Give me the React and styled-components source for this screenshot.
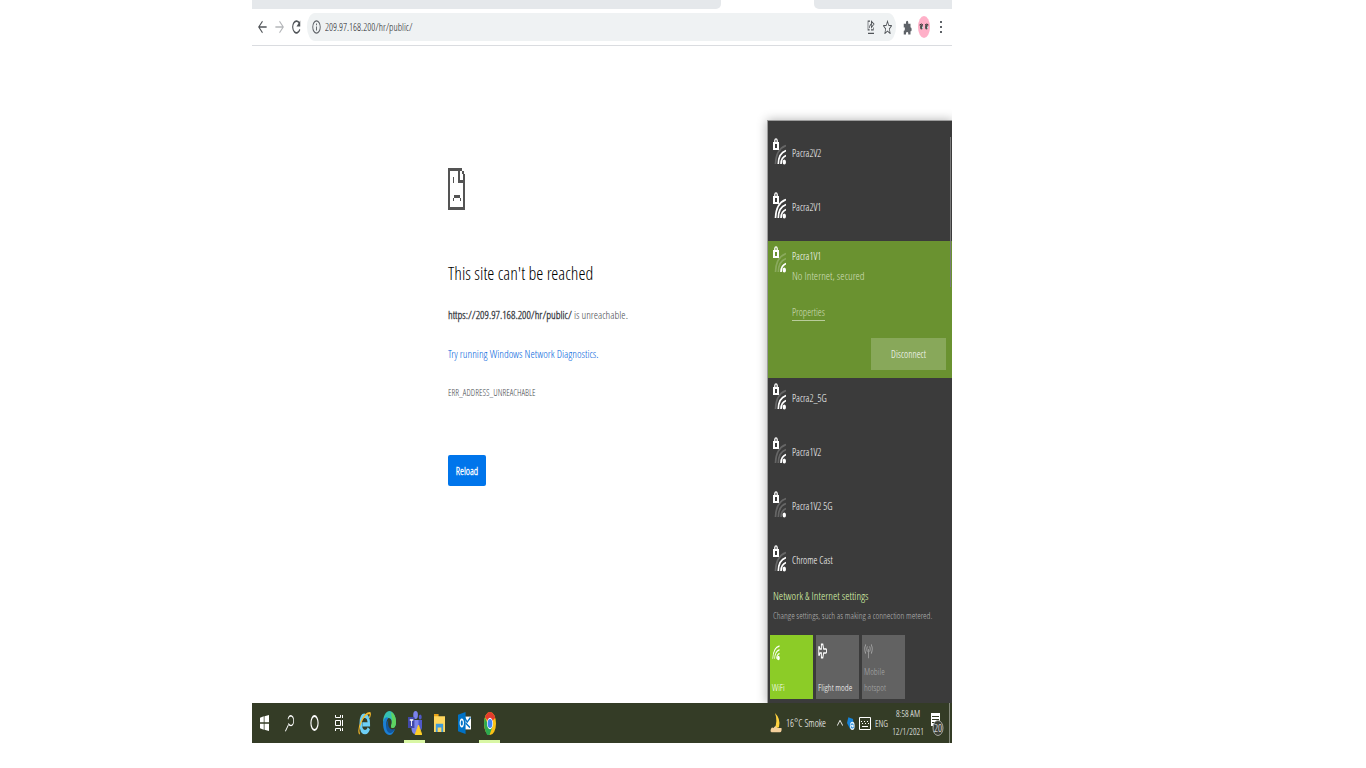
import React from "react";
import styled, { createGlobalStyle } from "styled-components";

const Global = createGlobalStyle`
  * { box-sizing: border-box; }
  body { margin: 0; background: #fff; font-family: "Open Sans Condensed Light", "Open Sans Condensed", "Roboto Condensed", Roboto, "Liberation Sans", sans-serif; font-weight: 300; font-size: 10px; color: #46494e; }
  button { font: inherit; border: 0; padding: 0; background: none; color: inherit; }
  h1, p, ul { margin: 0; padding: 0; }
  ul { list-style: none; }
  svg { display: block; flex: none; }
`;

const Page = styled.div`
  display: grid;
  grid-template-columns: 252fr 700fr 414fr;
`;
const Desktop = styled.div`
  grid-column: 2;
  min-width: 0;
`;

/* Browser chrome */
const TabStrip = styled.div`
  display: flex;
  justify-content: space-between;
  height: 9px;
`;
const TabGroup = styled.div`
  flex: ${(p) => p.$grow} 0 0;
  background: #e5e8eb;
  border-radius: ${(p) => (p.$end ? "0 0 0 5px" : "0 0 5px 0")};
`;
const ActiveTab = styled.div`
  flex: 93 0 0;
`;
const Toolbar = styled.div`
  display: flex;
  align-items: center;
  gap: 5px;
  height: 37px;
  padding: 0 5px 0 4px;
  border-bottom: 1px solid #dadce0;
`;
const IconButton = styled.button`
  display: grid;
  place-items: center;
  width: 12px;
  height: 24px;
`;
const AddressBar = styled.div`
  flex: 1;
  display: flex;
  align-items: center;
  gap: 4px;
  height: 28px;
  min-width: 0;
  padding: 0 3px 0 5px;
  border-radius: 8px / 14px;
  background: #eff2f3;
`;
const AddressInput = styled.input`
  flex: 1;
  min-width: 0;
  border: 0;
  padding: 0;
  background: transparent;
  font: inherit;
  font-size: 10px;
  line-height: 20px;
  color: #202124;
`;
const Avatar = styled.button`
  display: grid;
  place-items: center;
  width: 12px;
  height: 22px;
  border-radius: 50%;
  background: #ffb0c8;
`;

/* Content area */
const Content = styled.main`
  display: flex;
  justify-content: space-between;
  align-items: flex-end;
  padding-top: 75px;
  overflow: hidden;
`;
const ErrorPage = styled.section`
  align-self: flex-start;
  padding: 47px 0 0 196px;
  flex: 1;
  min-width: 0;
  white-space: nowrap;
`;
const Heading = styled.h1`
  margin-top: 48px;
  font-size: 18px;
  font-weight: 300;
  line-height: 30px;
  color: #000;
`;
const Line = styled.p`
  margin-top: ${(p) => p.$gap}px;
  font-size: ${(p) => p.$size}px;
  line-height: 20px;
  strong { font-weight: 700; }
  a { color: #0063dc; text-decoration: none; }
`;
const Reload = styled.button`
  display: block;
  margin-top: 52px;
  width: 38px;
  height: 31px;
  border-radius: 2px;
  background: #0075eb;
  color: #fff;
  font-size: 10px;
  font-weight: 700;
`;

/* Network flyout */
const Flyout = styled.aside`
  position: relative;
  flex: none;
  width: 184px;
  padding-top: 12px;
  background: #3b3b3b;
  color: #fff;
  box-shadow: 0 0 0 1px #9c9c9c, 0 0 10px 1px rgba(0, 0, 0, 0.3);
`;
const ScrollThumb = styled.span`
  position: absolute;
  top: 16px;
  right: 1px;
  width: 1px;
  height: 150px;
  background: #7a7a7a;
`;
const Network = styled.li`
  display: flex;
  align-items: flex-start;
  gap: 6px;
  height: 54px;
  padding: 5px 0 0 5px;
  &:last-child { height: 46px; }
`;
const NetworkName = styled.span`
  line-height: 20px;
  padding-top: 5px;
  font-size: 10px;
`;
const Connected = styled.li`
  display: flex;
  align-items: flex-start;
  gap: 6px;
  padding: 5px 6px 8px 5px;
  background: #6a9230;
`;
const Details = styled.div`
  flex: 1;
  display: flex;
  flex-direction: column;
  align-items: flex-start;
  line-height: 20px;
  font-size: 10px;
`;
const Status = styled.span`
  color: #d0deba;
  font-size: 11px;
`;
const Properties = styled.a`
  margin: 19px 0 17px;
  line-height: 15px;
  border-bottom: 1px solid #b9cc9b;
  color: #d0deba;
  text-decoration: none;
`;
const Disconnect = styled.button`
  align-self: flex-end;
  width: 75px;
  height: 32px;
  background: #88a85a;
  color: #fff;
`;
const Settings = styled.div`
  padding: 0 2px 4px;
  line-height: 20px;
`;
const SettingsLink = styled.a`
  display: block;
  padding-left: 3px;
  color: #dffbae;
  font-size: 11px;
  text-decoration: none;
`;
const Hint = styled.p`
  padding-left: 3px;
  color: #b4b4b4;
  font-size: 9px;
  white-space: nowrap;
`;
const Tiles = styled.div`
  display: flex;
  gap: 3px;
  margin-top: 9px;
`;
const Tile = styled.button`
  display: flex;
  flex-direction: column;
  justify-content: space-between;
  align-items: flex-start;
  width: 43px;
  height: 64px;
  padding: 8px 1px 3px 2px;
  background: ${(p) => (p.$on ? "#8ccc27" : "#626262")};
  color: ${(p) => (p.$off ? "#a8a8a8" : "#fff")};
  font-size: 9px;
  line-height: 16px;
  text-align: left;
`;

/* Taskbar */
const Taskbar = styled.footer`
  display: flex;
  justify-content: space-between;
  height: 40px;
  background: #343c26;
  color: #fff;
`;
const Apps = styled.nav`
  display: flex;
  gap: 4px;
  padding-left: 2px;
`;
const AppButton = styled.button`
  display: grid;
  place-items: center;
  width: 21px;
  height: 40px;
  border-bottom: 3px solid ${(p) => (p.$open ? "#d9f7a5" : "transparent")};
  padding-top: 3px;
`;
const Tray = styled.div`
  display: flex;
  align-items: center;
  gap: 4px;
  font-size: 9px;
  white-space: nowrap;
`;
const Weather = styled.button`
  display: flex;
  align-items: center;
  gap: 4px;
  width: 63px;
  font-size: 10px;
`;
const Clock = styled.time`
  display: flex;
  flex-direction: column;
  align-items: center;
  width: 32px;
  line-height: 18px;
`;
const Notifications = styled.button`
  display: grid;
  place-items: center;
  width: 17px;
  height: 28px;
`;
const ShowDesktop = styled.button`
  align-self: stretch;
  width: 3px;
  border-left: 1px solid #858a7c;
`;

/* Icons are drawn in a tall, narrow shape, so each takes its own box. */
const Icon = ({ w, h, box = "0 0 24 24", children, ...rest }) => (
  <svg width={w} height={h} viewBox={box} preserveAspectRatio="none" fill="none" stroke="currentColor" aria-hidden="true" {...rest}>
    {children}
  </svg>
);

const SignalIcon = ({ level }) => {
  const shade = (n) => ({ stroke: "#fff", opacity: level >= n ? 1 : 0.22 });
  return (
    <Icon w="13" h="27" box="0 0 13 27">
      <path d="M1.800 5V2.500Q2 .8 3 .8Q4 .8 4.200 2.500V5" stroke="#fff" strokeWidth="1.300" />
      <rect x="1" y="5" width="4" height="6" stroke="#fff" strokeWidth="2" />
      <path d="M2.500 26Q3 11 13 7.500" {...shade(4)} strokeWidth="1.700" />
      <path d="M5.300 26Q5.500 15 13 12.500" {...shade(3)} strokeWidth="1.700" />
      <path d="M8 26Q8 19.500 13 17.500" {...shade(2)} strokeWidth="1.700" />
      <ellipse cx="11.300" cy="24" rx="1.700" ry="2.500" fill="#fff" stroke="none" />
    </Icon>
  );
};

const before = [["Pacra2V2", 3], ["Pacra2V1", 4]];
const after = [["Pacra2_5G", 3], ["Pacra1V2", 2], ["Pacra1V2 5G", 1], ["Chrome Cast", 3]];

const NetworkRow = ({ name, level }) => (
  <Network>
    <SignalIcon level={level} />
    <NetworkName>{name}</NetworkName>
  </Network>
);

const Browser = () => (
  <header>
    <TabStrip>
      <TabGroup $grow={469} />
      <ActiveTab />
      <TabGroup $grow={138} $end />
    </TabStrip>
    <Toolbar>
      <IconButton aria-label="Back">
        <Icon w="9" h="14" strokeWidth="2.500" color="#505458"><path d="M23 12H3M12 2L2 12l10 10" /></Icon>
      </IconButton>
      <IconButton aria-label="Forward">
        <Icon w="9" h="14" strokeWidth="2.500" color="#b4b6b9"><path d="M1 12h20M12 2l10 10-10 10" /></Icon>
      </IconButton>
      <IconButton aria-label="Reload page">
        <Icon w="9" h="14" strokeWidth="3" color="#505458"><path d="M20 6A10 10 0 1 0 21 16" /><path d="M22 1v10H12z" fill="currentColor" stroke="none" /></Icon>
      </IconButton>
      <AddressBar>
        <Icon w="9" h="14" strokeWidth="2.500" color="#5f6368"><ellipse cx="12" cy="12" rx="10" ry="10.500" /><path d="M12 11v7M12 6v3" /></Icon>
        <AddressInput aria-label="Address" defaultValue="209.97.168.200/hr/public/" />
        <IconButton aria-label="Share">
          <Icon w="8" h="14" strokeWidth="2" color="#505458"><path d="M3 23h18M9 2H3v15h5M7 14q1-7 8-7M13 2l8 5-8 6zM12 17h7v-4" /></Icon>
        </IconButton>
        <IconButton aria-label="Bookmark">
          <Icon w="9" h="14" strokeWidth="2" color="#505458"><path d="M12 2l3 7 8 1-6 5 2 8-7-4-7 4 2-8-6-5 8-1z" /></Icon>
        </IconButton>
      </AddressBar>
      <IconButton aria-label="Extensions">
        <Icon w="9" h="15" fill="#5f6368" stroke="none"><path d="M2 6h6V4q0-3 3-3t3 3v2h6v6h1q2 0 2 3t-2 3h-1v5h-6v-2q0-2-3-2t-3 2v2H2v-6h1q2 0 2-3t-2-2H2z" /></Icon>
      </IconButton>
      <Avatar aria-label="Profile">
        <Icon w="10" h="8" box="0 0 20 16" strokeWidth="2"><path d="M1 4q4-4 7 0M12 4q4-4 7 0" stroke="#333" /><ellipse cx="5" cy="8" rx="3" ry="5" fill="#4d4d4d" stroke="none" /><ellipse cx="15" cy="8" rx="3" ry="5" fill="#4d4d4d" stroke="none" /><path d="M7 7v4M17 7v4" stroke="#bfe3df" /></Icon>
      </Avatar>
      <IconButton aria-label="Menu">
        <Icon w="3" h="14" box="0 0 3 14" fill="#5f6368" stroke="none"><path d="M0 1h2v2H0zM0 6h2v2H0zM0 11h2v2H0z" /></Icon>
      </IconButton>
    </Toolbar>
  </header>
);

const NetworkFlyout = () => (
  <Flyout>
    <ScrollThumb />
    <ul>
      {before.map(([name, level]) => <NetworkRow key={name} name={name} level={level} />)}
      <Connected>
        <SignalIcon level={2} />
        <Details>
          <span>Pacra1V1</span>
          <Status>No Internet, secured</Status>
          <Properties href="#properties">Properties</Properties>
          <Disconnect>Disconnect</Disconnect>
        </Details>
      </Connected>
      {after.map(([name, level]) => <NetworkRow key={name} name={name} level={level} />)}
    </ul>
    <Settings>
      <SettingsLink href="#settings">Network &amp; Internet settings</SettingsLink>
      <Hint>Change settings, such as making a connection metered.</Hint>
      <Tiles>
        <Tile $on>
          <Icon w="9" h="18" strokeWidth="2"><path d="M2 21Q3 6 20 4M7 21Q8 11 20 9M12 21Q13 15 20 14" /><ellipse cx="17" cy="20" rx="2.500" ry="2" fill="currentColor" /></Icon>
          WiFi
        </Tile>
        <Tile>
          <Icon w="9" h="16" strokeWidth="2.500"><path d="M9 2h4l2 7h6q2 0 2 3t-2 3h-6l-2 7H9v-7H5l-1 3H2V6h2l1 3h4z" /></Icon>
          Flight mode
        </Tile>
        <Tile $off>
          <Icon w="9" h="16" strokeWidth="2"><path d="M5 2Q-1 9 5 16M9 5Q6 9 9 13M15 5Q18 9 15 13M19 2q6 7 0 14M12 9v14" /></Icon>
          Mobile hotspot
        </Tile>
      </Tiles>
    </Settings>
  </Flyout>
);

const TaskbarApps = () => (
  <Apps>
    <AppButton aria-label="Start">
      <Icon w="9" h="16" fill="#fff" stroke="none"><path d="M0 4l10-2v9H0zM12 2l12-2v11H12zM0 13h10v9L0 20zM12 13h12v11l-12-2z" /></Icon>
    </AppButton>
    <AppButton aria-label="Search">
      <Icon w="9" h="17" strokeWidth="2"><path d="M8 6Q10 1 16 1q7 1 7 7t-7 7q-5 0-7-3M9 14L1 23" /></Icon>
    </AppButton>
    <AppButton aria-label="Cortana">
      <Icon w="9" h="16" strokeWidth="3"><ellipse cx="12" cy="12" rx="9.500" ry="10.500" /></Icon>
    </AppButton>
    <AppButton aria-label="Task view">
      <Icon w="9" h="16" box="0 0 9 16"><path d="M.5 0v2.500h5V0M.5 16v-2.500h5V16M.5 5.500h5v5h-5zM7.500 0v3M7.500 5v6M7.500 13v3" /></Icon>
    </AppButton>
    <AppButton aria-label="Internet Explorer">
      <Icon w="13" h="23"><path d="M20 17q-2 4-7 4-8 0-8-9t8-8q7 0 7 9H8" stroke="#6dcff6" strokeWidth="4.500" /><path d="M3 23q-4-4 3-13T22 1q2 1-1 5" stroke="#f5b92b" strokeWidth="2" /></Icon>
    </AppButton>
    <AppButton aria-label="Edge">
      <Icon w="13" h="24" stroke="none">
        <path d="M0 12C0 5 5 0 12 0s12 5 12 11c0 5-4 6-7 6-2 0-3-2-1-4 1-4-2-6-6-6C5 7 2 9 0 12z" fill="#35c1b1" />
        <path d="M15 1q9 3 9 10c0 5-4 6-7 6-2 0-3-2-1-4 2-5-1-8-1-12z" fill="#5fd35f" />
        <path d="M0 12C1 7 6 5 10 7c-4 2-5 7-2 11 4 4 10 3 14 0-3 5-7 6-10 6C5 24 0 19 0 12z" fill="#1b7fd4" />
        <path d="M10 9c-2 6 2 11 12 9-5 5-12 5-15 1-2-3 0-9 3-10z" fill="#12579f" />
      </Icon>
    </AppButton>
    <AppButton $open aria-label="Teams">
      <Icon w="14" h="24" stroke="none">
        <circle cx="13" cy="4" r="4" fill="#7b83eb" /><circle cx="21" cy="6" r="2.500" fill="#5059c9" />
        <path d="M15 9h9v8q-1 3-4 3h-5z" fill="#5059c9" /><path d="M6 9h12v9q-1 5-6 5t-6-5z" fill="#7b83eb" />
        <path d="M0 6h11v11H0z" fill="#4149a8" /><path d="M3 9h6M6 9v6" stroke="#fff" strokeWidth="1.500" />
        <path d="M18 14l6 10H12z" fill="#ffcf27" stroke="#ffcf27" />
      </Icon>
    </AppButton>
    <AppButton aria-label="File Explorer">
      <Icon w="11" h="18" stroke="none"><path d="M0 0h10v4H0z" fill="#e8a317" /><path d="M0 3h24v21H0z" fill="#ffd75e" /><path d="M4 24V13h16v11h-4v-6H8v6z" fill="#3e9adb" /></Icon>
    </AppButton>
    <AppButton aria-label="Outlook">
      <Icon w="13" h="22" stroke="none"><path d="M11 5h13v14H11z" fill="#fff" /><path d="M12 6l5 5 6-5M14 12l8 5" stroke="#0072c6" strokeWidth="2" /><path d="M0 3L14 0v24L0 21z" fill="#0072c6" /><ellipse cx="7" cy="12" rx="3" ry="4" stroke="#fff" strokeWidth="2" /></Icon>
    </AppButton>
    <AppButton $open aria-label="Chrome">
      <Icon w="12" h="23" stroke="none"><circle cx="12" cy="12" r="12" fill="#fbc116" /><path d="M12 12L2 5.500Q6 0 12 0t10.500 6z" fill="#e33b2e" /><path d="M1.800 5.500Q-2 13 3 20t8 4l6-9-8-1z" fill="#2da94f" /><circle cx="12" cy="12" r="6" fill="#fff" /><circle cx="12" cy="12" r="4.700" fill="#4285f4" /></Icon>
    </AppButton>
  </Apps>
);

const TaskbarTray = () => (
  <Tray>
    <Weather>
      <Icon w="12" h="20" stroke="none"><path d="M10 0q6 10-1 19l9-2q4-10-8-17z" fill="#ffd23f" /><path d="M1 22q1-6 6-4 4-4 7 0h9q1 5-3 5H3z" fill="#f4cf9b" /></Icon>
      16°C Smoke
    </Weather>
    <Icon w="6" h="8" strokeWidth="3"><path d="M1 20L12 4l11 16" /></Icon>
    <Icon w="8" h="14" stroke="none"><path d="M4 2l14 3 3 14-12 3L0 12z" fill="#1683d8" /><circle cx="16" cy="17" r="7" fill="#e6f3fb" /><path d="M11 16q4-5 9 0M21 18q-4 5-9 0" stroke="#1683d8" strokeWidth="2" /></Icon>
    <Icon w="12" h="13" box="0 0 12 13"><path d="M.5.5h11v12H.5zM3 9.500h6" /><path d="M2 4.500h8M3 6.500h7" strokeDasharray="1 2" /></Icon>
    <span>ENG</span>
    <Clock><span>8:58 AM</span><span>12/1/2021</span></Clock>
    <Notifications aria-label="20 notifications">
      <Icon w="15" h="26" box="0 0 15 26" stroke="none">
        <path d="M2 3h9v13H7l-3 3v-3H2z" fill="#fff" /><path d="M3 6.500h7M3 9.500h7M3 12.500h5" stroke="#343c26" />
        <ellipse cx="9" cy="18" rx="5" ry="7.500" fill="#3d4138" stroke="#a5a8a0" />
        <text x="9" y="22" fill="#fff" fontSize="10" textAnchor="middle">20</text>
      </Icon>
    </Notifications>
    <ShowDesktop aria-label="Show desktop" />
  </Tray>
);

export default function App() {
  return (
    <Page>
      <Global />
      <Desktop>
        <Browser />
        <Content>
          <ErrorPage>
            <Icon w="17" h="42" box="0 0 17 42" stroke="none" shapeRendering="crispEdges">
              <path fill="#545454" fillRule="evenodd" d="M0 0h14v3h2v3h1v36H0zM2 3v36h13V15h-5V3zM12 3v9h3V6h-1V3zM5 9h1v6H5zM6 27h6v3H6zM5 30h1v3H5zM12 30h1v3h-1z" />
            </Icon>
            <Heading>This site can't be reached</Heading>
            <Line $gap={17} $size={11}><strong>https://209.97.168.200/hr/public/</strong> is unreachable.</Line>
            <Line $gap={19} $size={11}><a href="#diagnostics">Try running Windows Network Diagnostics.</a></Line>
            <Line $gap={19} $size={9}>ERR_ADDRESS_UNREACHABLE</Line>
            <Reload>Reload</Reload>
          </ErrorPage>
          <NetworkFlyout />
        </Content>
        <Taskbar>
          <TaskbarApps />
          <TaskbarTray />
        </Taskbar>
      </Desktop>
    </Page>
  );
}
